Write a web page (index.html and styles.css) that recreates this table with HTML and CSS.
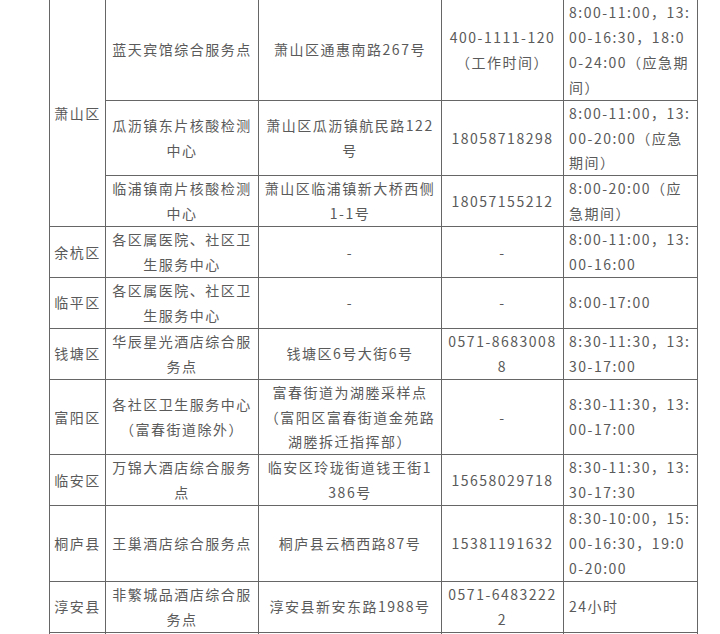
FILE: index.html
```html
<!DOCTYPE html>
<html lang="zh-CN">
<head>
<meta charset="utf-8">
<title>核酸检测点</title>
<link rel="stylesheet" href="styles.css">
</head>
<body>
<div class="page">
<table class="sites">
<colgroup>
<col class="c-area"><col class="c-name"><col class="c-addr"><col class="c-tel"><col class="c-time">
</colgroup>
<tbody>
<tr>
<td class="area" rowspan="3">萧山区</td>
<td>蓝天宾馆综合服务点</td>
<td>萧山区通惠南路267号</td>
<td>400-1111-120（工作时间）</td>
<td class="time">8:00-11:00，13:00-16:30，18:00-24:00（应急期间）</td>
</tr>
<tr>
<td>瓜沥镇东片核酸检测中心</td>
<td>萧山区瓜沥镇航民路122号</td>
<td>18058718298</td>
<td class="time">8:00-11:00，13:00-20:00（应急期间）</td>
</tr>
<tr>
<td>临浦镇南片核酸检测中心</td>
<td>萧山区临浦镇新大桥西侧1-1号</td>
<td>18057155212</td>
<td class="time">8:00-20:00（应急期间）</td>
</tr>
<tr>
<td class="area">余杭区</td>
<td>各区属医院、社区卫生服务中心</td>
<td>-</td>
<td>-</td>
<td class="time">8:00-11:00，13:00-16:00</td>
</tr>
<tr>
<td class="area">临平区</td>
<td>各区属医院、社区卫生服务中心</td>
<td>-</td>
<td>-</td>
<td class="time">8:00-17:00</td>
</tr>
<tr>
<td class="area">钱塘区</td>
<td>华辰星光酒店综合服务点</td>
<td>钱塘区6号大街6号</td>
<td>0571-86830088</td>
<td class="time">8:30-11:30，13:30-17:00</td>
</tr>
<tr>
<td class="area">富阳区</td>
<td>各社区卫生服务中心（富春街道除外）</td>
<td>富春街道为湖塍采样点（富阳区富春街道金苑路湖塍拆迁指挥部）</td>
<td>-</td>
<td class="time">8:30-11:30，13:00-17:00</td>
</tr>
<tr>
<td class="area">临安区</td>
<td>万锦大酒店综合服务点</td>
<td>临安区玲珑街道钱王街1386号</td>
<td>15658029718</td>
<td class="time">8:30-11:30，13:30-17:30</td>
</tr>
<tr>
<td class="area">桐庐县</td>
<td>王巢酒店综合服务点</td>
<td>桐庐县云栖西路87号</td>
<td>15381191632</td>
<td class="time">8:30-10:00，15:00-16:30，19:00-20:00</td>
</tr>
<tr>
<td class="area">淳安县</td>
<td>非繁城品酒店综合服务点</td>
<td>淳安县新安东路1988号</td>
<td>0571-64832222</td>
<td class="time">24小时</td>
</tr>
<tr class="more">
<td class="area"></td>
<td></td>
<td></td>
<td></td>
<td class="time"></td>
</tr>
</tbody>
</table>
</div>
</body>
</html>
```

FILE: styles.css
```css
html, body {
  margin: 0;
  padding: 0;
  background: #fff;
}

.page {
  padding-left: 49px;
  margin-top: -1px;
}

.sites {
  border-collapse: collapse;
  table-layout: fixed;
  width: 649px;
  font-family: "Noto Sans CJK SC", "Noto Sans", sans-serif;
  font-size: 14px;
  letter-spacing: 1.5px;
  line-height: 24.9px;
  color: #5a5a5a;
}

.c-area { width: 56px; }
.c-name { width: 153px; }
.c-addr { width: 183px; }
.c-tel  { width: 122px; }
.c-time { width: 134px; }

.sites td {
  border: 1px solid #666;
  padding: 0 5px;
  text-align: center;
  vertical-align: middle;
  word-break: break-all;
}

.sites td.area {
  padding: 0 2px;
}

.sites td.time {
  text-align: left;
}

.sites tr.more td {
  height: 40px;
}
```
